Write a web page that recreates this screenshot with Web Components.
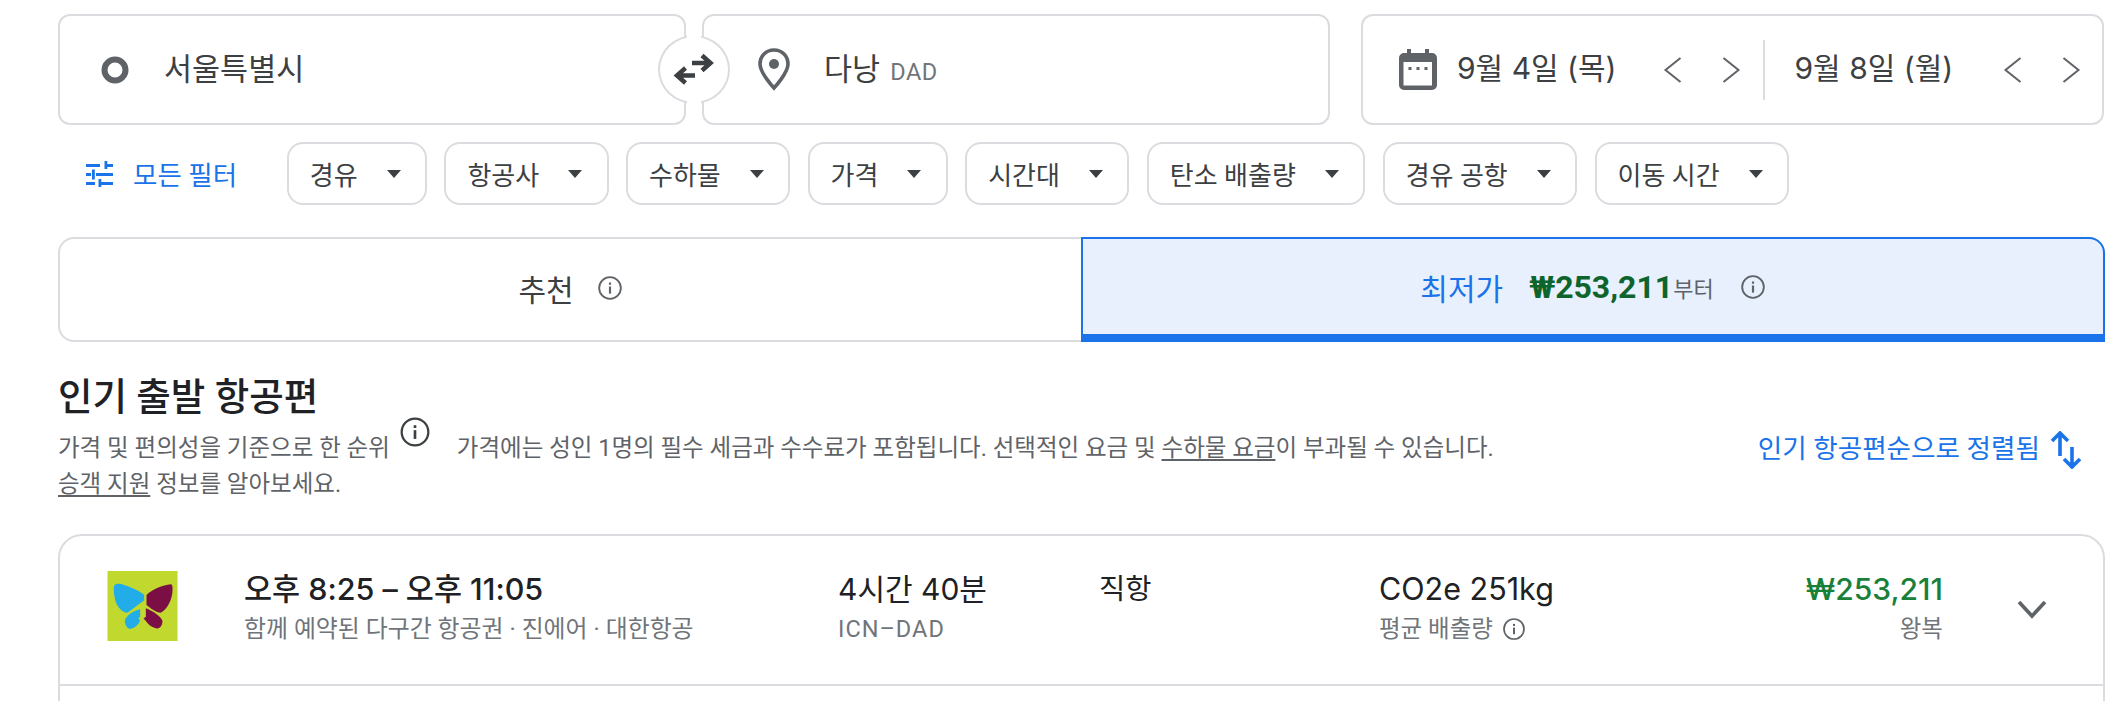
<!DOCTYPE html>
<html lang="ko"><head><meta charset="utf-8"><title>항공편</title>
<style>
html,body{margin:0;padding:0;height:701px;overflow:hidden;background:#fff}
body{font-family:Roboto,"Noto Sans CJK KR",sans-serif;color:#202124}
</style></head><body>
<fl-app></fl-app>
<script>
const FONT='Roboto,"Noto Sans CJK KR",sans-serif';
const NUM='Inter,"Noto Sans CJK KR",sans-serif';
const def=(name,html)=>customElements.define(name,class extends HTMLElement{constructor(){super();this.attachShadow({mode:'open'}).innerHTML=html(this)}});
const info=(s,c='#5f6368')=>`<svg width="${s}" height="${s}" viewBox="0 0 24 24" style="display:block;flex:none"><circle cx="12" cy="12" r="10" fill="none" stroke="${c}" stroke-width="1.7"/><rect x="11" y="10.6" width="2" height="6.6" fill="${c}"/><rect x="11" y="6.9" width="2" height="2.1" fill="${c}"/></svg>`;
const chev=(d)=>`<svg width="24" height="30" viewBox="0 0 24 30" style="display:block"><path d="${d=='l'?'M19.500 3 L4.500 15 L19.500 27':'M4.500 3 L19.500 15 L4.500 27'}" fill="none" stroke="#5f6368" stroke-width="2"/></svg>`;

def('fl-place',()=>`<style>
:host{display:flex;align-items:center;box-sizing:border-box;flex:none;width:628px;height:111px;border:2px solid #dadce0;border-radius:12px;background:#fff;font-size:30.500px;color:#3c4043}
.t{margin-bottom:6px;display:flex;align-items:baseline}
::slotted(small){font-size:23.500px;color:#70757a;margin-left:10px;letter-spacing:.6px}
</style><slot name="icon"></slot><span class="t"><slot></slot></span>`);

def('fl-swap',()=>`<style>
:host{display:flex;align-items:center;justify-content:center;position:absolute;left:600px;top:21px;width:72px;height:69px;box-sizing:border-box;border:2px solid #dadce0;border-radius:50%;background:#fff}
:host::before,:host::after{content:"";position:absolute;left:27px;width:14px;height:6px;background:#fff}
:host::before{top:-2px}:host::after{bottom:-2px}
</style><svg width="44" height="33" viewBox="0 0 44 33" style="display:block"><g fill="none" stroke="#3c4043" stroke-width="4.500"><path d="M20 10H39M30 2.500L38.500 10L30 17.500"/><path d="M23 22.500H5M13.500 15L5 22.500L13.500 30"/></g></svg>`);

def('fl-date',()=>`<style>
:host{display:flex;align-items:center;flex:none;font-size:30px;font-family:${NUM};color:#3c4043;white-space:nowrap}
.t{width:var(--tw,204px);margin-bottom:8px;display:block}
.n{display:flex;gap:34px}
</style><span class="t"><slot></slot></span><span class="n">${chev('l')}${chev('r')}</span>`);

def('fl-dates',()=>`<style>
:host{display:flex;align-items:center;box-sizing:border-box;flex:none;width:743px;margin-left:15px;height:111px;border:2px solid #dadce0;border-radius:12px;padding:0 0 0 36px}
.cal{margin-right:20px;flex:none;display:block}
.sep{width:1.500px;height:60px;background:#dadce0;margin:0 30px 0 20px;flex:none}
</style><svg class="cal" width="38" height="41" viewBox="0 0 38 41"><path fill="#5f6368" d="M8 0h4v4h14V0h4v4h3a5 5 0 0 1 5 5v27a5 5 0 0 1-5 5H5a5 5 0 0 1-5-5V9a5 5 0 0 1 5-5h3z"/><rect x="4.500" y="13" width="28.500" height="23.500" fill="#fff"/><rect x="9.500" y="18" width="3" height="3" fill="#5f6368"/><rect x="17.500" y="18" width="3" height="3" fill="#5f6368"/><rect x="25.500" y="18" width="3" height="3" fill="#5f6368"/></svg>
<fl-date>9월 4일 (목)</fl-date><span class="sep"></span><fl-date style="--tw:206px">9월 8일 (월)</fl-date>`);

def('fl-search',()=>`<style>
:host{display:flex;position:relative;gap:16px}
</style>
<fl-place><svg slot="icon" width="28" height="28" viewBox="0 0 28 28" style="margin:0 35px 0 41px;flex:none"><circle cx="14" cy="14" r="10.500" fill="none" stroke="#5f6368" stroke-width="6"/></svg>서울특별시</fl-place>
<fl-place><svg slot="icon" width="36" height="44" viewBox="0 0 36 44" style="margin:0 32px 2px 52px;flex:none"><path fill="none" stroke="#5f6368" stroke-width="3.600" d="M18 3C10 3 4 9 4 17c0 9 14 24 14 24s14-15 14-24C32 9 26 3 18 3z"/><circle cx="18" cy="17" r="5" fill="#5f6368"/></svg>다낭<small>DAD</small></fl-place>
<fl-dates></fl-dates><fl-swap></fl-swap>`);

def('fl-chip',()=>`<style>
:host{display:inline-flex;align-items:center;box-sizing:border-box;height:63px;border:2px solid #dadce0;border-radius:16px;padding:0 24.500px 0 21px;gap:29px;font-size:26px;color:#3c4043;white-space:nowrap;flex:none}
i{display:block;width:0;height:0;border:7px solid transparent;border-top:8px solid #3c4043;border-bottom:0}
</style><slot></slot><i></i>`);

def('fl-filters',()=>`<style>
:host{display:flex;align-items:center;gap:17.300px;margin-top:17px}
.all{display:flex;align-items:center;gap:20px;color:#1a73e8;font-size:26.500px;width:211.500px;padding-left:28px;box-sizing:border-box;flex:none;white-space:nowrap}
</style><span class="all"><svg width="27" height="26" viewBox="0 0 27 26" style="flex:none;display:block"><g fill="#1a73e8"><rect x="0" y="3" width="14" height="3"/><rect x="21" y="3" width="6" height="3"/><rect x="18.500" y="0" width="2.800" height="8"/><rect x="0" y="12" width="5" height="3"/><rect x="10" y="12" width="17" height="3"/><rect x="6" y="8.500" width="2.800" height="10"/><rect x="0" y="21" width="9" height="3"/><rect x="15" y="21" width="12" height="3"/><rect x="12.500" y="18" width="2.800" height="8"/></g></svg>모든 필터</span>
<fl-chip>경유</fl-chip><fl-chip>항공사</fl-chip><fl-chip>수하물</fl-chip><fl-chip>가격</fl-chip><fl-chip>시간대</fl-chip><fl-chip>탄소 배출량</fl-chip><fl-chip>경유 공항</fl-chip><fl-chip>이동 시간</fl-chip>`);

def('fl-tabs',()=>`<style>
:host{display:flex;box-sizing:border-box;height:105px;margin-top:32px;border:2px solid #dadce0;border-radius:16px;position:relative}
.t{flex:1;display:flex;align-items:center;justify-content:center;font-size:30px;color:#3c4043;white-space:nowrap;box-sizing:border-box}
.one{gap:23px;padding:0 2px 4px 0}
.two{position:relative;margin:-2px;box-sizing:border-box;border:2px solid #1a73e8;border-bottom:8px solid #1a73e8;border-radius:0 16px 0 0;background:#e8f0fe;color:#1a73e8;flex:0 0 1024px;font-size:30px}
b{font-weight:700;color:#0d652d;margin-left:26px;font-size:32px}
small{font-size:22px;color:#5f6368}
.two svg{margin-left:26px}
</style><div class="t one">추천 ${info(26)}</div><div class="t two">최저가<b>₩253,211</b><small>부터</small>${info(26)}</div>`);

def('fl-heading',()=>`<style>
:host{display:block;margin-top:30px}
h2{margin:0;font-size:37.500px;font-weight:500;line-height:50px;color:#202124}
.d{font-size:23.500px;line-height:36px;color:#5f6368;margin-top:8px;width:1600px}
.d u{text-underline-offset:3px}
.ic{display:inline-block;vertical-align:top;margin:-14px 26px 0 9px}
</style>
<h2>인기 출발 항공편</h2>
<div class="d">가격 및 편의성을 기준으로 한 순위<span class="ic">${info(32,'#3c4043')}</span>가격에는 성인 1명의 필수 세금과 수수료가 포함됩니다. 선택적인 요금 및 <u>수하물 요금</u>이 부과될 수 있습니다.<br><u>승객 지원</u> 정보를 알아보세요.</div>`);

def('fl-sort',()=>`<style>
:host{display:flex;align-items:center;position:absolute;right:33px;top:427px;gap:10px;color:#1a73e8;font-size:26.600px;white-space:nowrap}
.t{margin-bottom:6px}
svg{display:block}
</style><span class="t"><slot></slot></span><svg width="32" height="38" viewBox="0 0 32 38"><g fill="none" stroke="#1a73e8" stroke-width="3.600"><path d="M10 25V2M2 10L10 2L18 10"/><path d="M22 16V36M14 28L22 36L30 28"/></g></svg>`);

def('fl-logo',()=>`<style>:host{display:block;width:71px;height:70px}svg{display:block}</style><svg width="71" height="70" viewBox="0 0 210 210"><rect width="210" height="210" fill="#c1d82f"/>
<path fill="#22ade9" d="M20 44C25 36 40 38 50 42C75 50 100 62 110 72V88L60 125C45 125 30 110 24 90C20 75 17 55 20 44Z"/>
<path fill="#7b0f45" d="M117 72C135 55 165 42 190 40C196 40 196 55 194 70C190 95 175 118 160 125C145 125 130 112 117 102Z"/>
<path fill="#22ade9" d="M98 115V138L92 142L98 148C92 165 78 172 68 174C58 172 52 160 52 150C55 135 75 120 98 115Z"/>
<path fill="#7b0f45" d="M115 112C135 120 160 135 165 150C165 165 155 175 145 172C130 168 120 158 115 150L108 142L115 138Z"/></svg>`);

def('fl-cell',()=>`<style>
:host{display:block;white-space:nowrap;padding-top:3px}
.a{display:block;font-size:var(--a,30px);font-family:${NUM};line-height:40px;color:var(--ac,#202124);font-weight:var(--w,400)}
.b{display:flex;align-items:center;gap:9px;justify-content:var(--j,flex-start);font-size:23.500px;line-height:34px;color:#70757a;margin-top:3px;min-height:34px}
</style><span class="a"><slot></slot></span><span class="b"><slot name="sub"></slot></span>`);

def('fl-row',()=>`<style>
:host{display:grid;grid-template-columns:71px 594px 261px 280px 380px 250px;align-items:center;box-sizing:border-box;height:150px;border-bottom:2px solid #dadce0;padding:0 0 8px 47px}
.m{margin-left:66px;--a:30.500px;--w:500}
.c{margin-left:66px}
.s{--a:28.500px}
fl-cell.p{text-align:right;--ac:#188038;--w:500;--j:flex-end}
</style>
<fl-logo></fl-logo>
<fl-cell class="m">오후 8:25 – 오후 11:05<span slot="sub" style="font-size:23.900px">함께 예약된 다구간 항공권 · 진에어 · 대한항공</span></fl-cell>
<fl-cell class="c">4시간 40분<span slot="sub" style="letter-spacing:1px">ICN–DAD</span></fl-cell>
<fl-cell class="c s">직항<span slot="sub"></span></fl-cell>
<fl-cell class="c" style="--a:30.500px">CO2e 251kg<span slot="sub" style="display:flex;gap:9px;align-items:center">평균 배출량 ${info(24)}</span></fl-cell>
<fl-cell class="p">₩253,211<span slot="sub">왕복</span></fl-cell>`);

def('fl-card',()=>`<style>
:host{display:block;box-sizing:border-box;height:240px;margin-top:32px;border:2px solid #dadce0;border-radius:24px;position:relative}
svg{position:absolute;right:54px;top:56px}
</style><fl-row></fl-row><svg width="34" height="34" viewBox="0 0 34 34"><path d="M4 10L17 24L30 10" fill="none" stroke="#5f6368" stroke-width="3.600"/></svg>`);

def('fl-app',()=>`<style>
:host{display:block;position:relative;box-sizing:border-box;width:2115px;height:701px;overflow:hidden;padding:14px 10px 0 58px;font-family:${FONT}}
</style><fl-search></fl-search><fl-filters></fl-filters><fl-tabs></fl-tabs><fl-heading></fl-heading><fl-sort>인기 항공편순으로 정렬됨</fl-sort><fl-card></fl-card>`);
</script>
</body></html>
